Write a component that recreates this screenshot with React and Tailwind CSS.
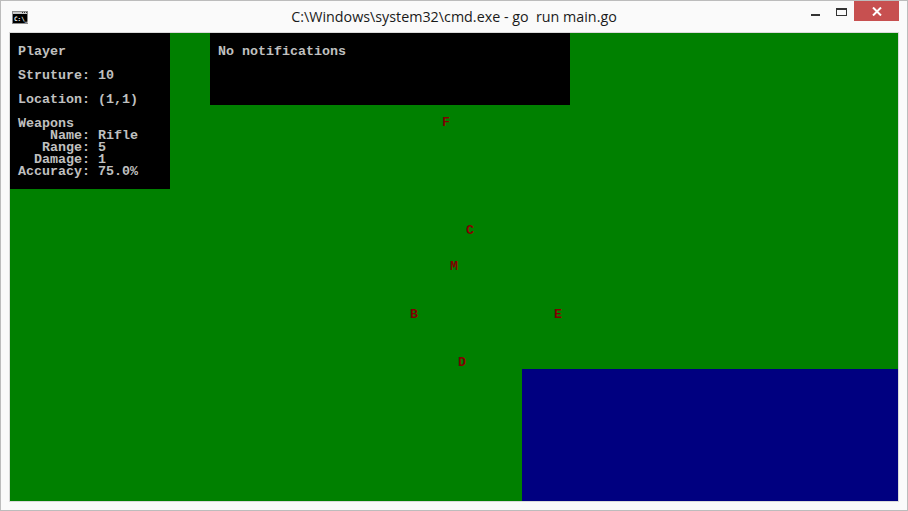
const mono = { fontFamily: '"Liberation Mono", "DejaVu Sans Mono", monospace' };

const playerLines = [
    'Player',
    '',
    'Struture: 10',
    '',
    'Location: (1,1)',
    '',
    'Weapons',
    '    Name: Rifle',
    '   Range: 5',
    '  Damage: 1',
    'Accuracy: 75.0%',
];

function ConsoleIcon() {
    return (
        <svg width="16" height="13" viewBox="0 0 16 13">
            <rect x="0.5" y="0.5" width="15" height="12" fill="#000" stroke="#8a8a8a" />
            <rect x="1" y="1" width="14" height="2" fill="#c8c8c8" />
            <rect x="10" y="1" width="1" height="1" fill="#333" />
            <rect x="12" y="1" width="1" height="1" fill="#333" />
            <rect x="14" y="1" width="1" height="1" fill="#333" />
            <text x="2" y="10" fontSize="6" fontWeight="bold" fill="#fff" fontFamily="DejaVu Sans Mono, monospace">C:\_</text>
        </svg>
    );
}

function TitleBar() {
    return (
        <div className="relative h-[31px] flex items-center shrink-0">
            <div className="pl-[11px] pt-[1px] flex items-center">
                <ConsoleIcon />
            </div>
            <div
                className="absolute inset-x-0 top-0 h-[31px] flex items-center justify-center text-[14.3px] text-[#1a1a1a] pointer-events-none"
                style={{ fontFamily: '"Open Sans", "Noto Sans", sans-serif' }}
            >
                <span className="whitespace-pre">C:\Windows\system32\cmd.exe - go  run main.go</span>
            </div>
            <div className="ml-auto flex items-start self-start h-[21px]">
                {/* minimize */}
                <div className="w-[26px] h-[20px] flex items-end justify-center pb-[5px]">
                    <div className="w-[9px] h-[2px] bg-[#333]" />
                </div>
                {/* maximize */}
                <div className="w-[26px] h-[20px] flex items-center justify-center pt-[1px]">
                    <div className="w-[11px] h-[8px] border border-[#333] border-t-2" />
                </div>
                {/* close */}
                <div className="w-[45px] h-[20px] bg-[#c75050] flex items-center justify-center mr-[8px]">
                    <svg width="10" height="9" viewBox="0 0 10 9">
                        <path d="M1 0.5 L9 8.5 M9 0.5 L1 8.5" stroke="#fff" strokeWidth="2" />
                    </svg>
                </div>
            </div>
        </div>
    );
}

function Letter({ ch, className }) {
    return (
        <span className={`${className} text-[#800000] font-bold leading-[12px]`}>{ch}</span>
    );
}

export default function App() {
    return (
        <div className="w-[908px] h-[511px] border border-[#bcbcbc] bg-[#fafafa] flex flex-col">
            <TitleBar />
            <div className="ml-[8px] w-[890px] h-[470px] border border-[#dadada]">
                <div
                    className="grid grid-cols-[repeat(111,8px)] grid-rows-[repeat(39,12px)] bg-[#008000] text-[13.333px] leading-[12px]"
                    style={mono}
                >
                    {/* player panel */}
                    <div className="col-start-1 col-span-20 row-start-1 row-span-13 bg-black text-[#c0c0c0] font-bold px-[8px] pt-[13px]">
                        {playerLines.map((line, i) => (
                            <div key={i} className="h-[12px] whitespace-pre">{line}</div>
                        ))}
                    </div>

                    {/* notifications */}
                    <div className="col-start-26 col-span-45 row-start-1 row-span-6 bg-black text-[#c0c0c0] font-bold px-[8px] pt-[13px]">
                        <div className="h-[12px] whitespace-pre">No notifications</div>
                    </div>

                    {/* water */}
                    <div className="col-start-65 col-span-47 row-start-29 row-span-11 bg-[#000080]" />

                    <Letter ch="F" className="col-start-55 row-start-8" />
                    <Letter ch="C" className="col-start-58 row-start-17" />
                    <Letter ch="M" className="col-start-56 row-start-20" />
                    <Letter ch="B" className="col-start-51 row-start-24" />
                    <Letter ch="E" className="col-start-69 row-start-24" />
                    <Letter ch="D" className="col-start-57 row-start-28" />
                </div>
            </div>
        </div>
    );
}
